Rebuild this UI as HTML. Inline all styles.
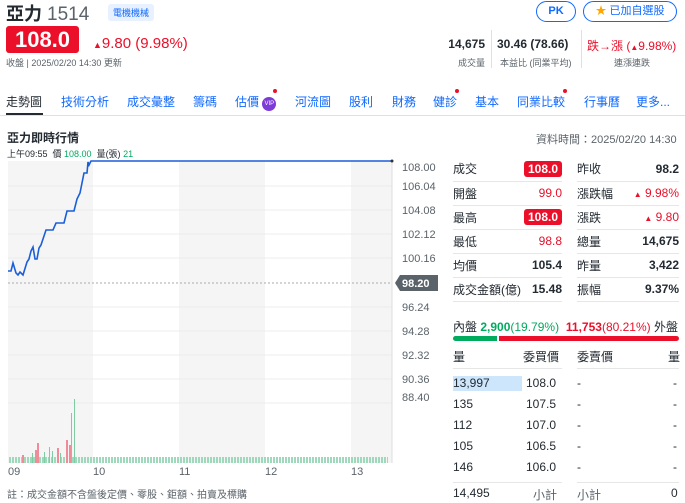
<!DOCTYPE html><html><head><meta charset="utf-8"><style>
*{margin:0;padding:0;box-sizing:border-box}
body{width:685px;height:503px;overflow:hidden;background:#fff;font-family:"Liberation Sans","Noto Sans CJK TC",sans-serif;color:#232a31;position:relative}
.a{position:absolute;white-space:nowrap}
.r{color:#eb0f29}.g{color:#00ab5e}
.tab{position:absolute;top:93px;font-size:12px;color:#0f69ff}
table{border-collapse:collapse}
.q td{height:24px;border-bottom:1px solid #e6e6e6;font-size:12px}
.badge{background:#eb0f29;color:#fff;border-radius:3px;padding:1px 4px;font-weight:bold}
</style></head><body>
<div class="a" style="left:6px;top:0px;font-size:18px;font-weight:bold">亞力 <span style="font-weight:normal;color:#5b636a;font-size:19px">1514</span></div>
<div class="a" style="left:108px;top:4px;font-size:9px;color:#0f69ff;background:#e8f1ff;padding:2px 5px;border-radius:3px">電機機械</div>
<div class="a" style="left:536px;top:1px;width:40px;height:21px;border:1px solid #0f69ff;border-radius:11px;color:#0f69ff;font-size:11px;font-weight:bold;text-align:center;line-height:19px">PK</div>
<div class="a" style="left:583px;top:1px;width:94px;height:21px;border:1px solid #0f69ff;border-radius:11px;color:#0f69ff;font-size:11px;text-align:center;line-height:19px"><span style="color:#ffa700">★</span> 已加自選股</div>
<div class="a" style="left:6px;top:26px;width:73px;height:27px;background:#eb0f29;border-radius:3px;color:#fff;font-size:22px;font-weight:bold;text-align:center;line-height:27px">108.0</div>
<div class="a r" style="left:93px;top:35px;font-size:15px"><span style="font-size:9px">▲</span>9.80 (9.98%)</div>
<div class="a" style="left:6px;top:56px;font-size:9px;color:#5b636a">收盤 | 2025/02/20 14:30 更新</div>
<div class="a" style="left:441px;top:37px;font-size:12px;font-weight:bold;width:44px;text-align:right">14,675</div>
<div class="a" style="left:441px;top:56px;font-size:9px;color:#5b636a;width:44px;text-align:right">成交量</div>
<div class="a" style="left:491px;top:30px;height:38px;border-left:1px solid #e0e0e0"></div>
<div class="a" style="left:497px;top:37px;font-size:12px;font-weight:bold">30.46 (78.66)</div>
<div class="a" style="left:500px;top:56px;font-size:9px;color:#5b636a">本益比 (同業平均)</div>
<div class="a" style="left:581px;top:30px;height:38px;border-left:1px solid #e0e0e0"></div>
<div class="a r" style="left:587px;top:37px;font-size:12px">跌→漲 (<span style="font-size:8px">▲</span>9.98%)</div>
<div class="a" style="left:614px;top:56px;font-size:9px;color:#5b636a">連漲連跌</div>
<div class="tab" style="left:6px;color:#232a31">走勢圖</div>
<div class="a" style="left:6px;top:113px;width:37px;height:3px;background:#232a31"></div>
<div class="a" style="left:0;top:115px;width:685px;border-top:1px solid #e0e0e0"></div>
<div class="tab" style="left:61px">技術分析</div><div class="tab" style="left:127px">成交彙整</div><div class="tab" style="left:193px">籌碼</div>
<div class="tab" style="left:235px">估價 <span style="display:inline-block;width:14px;height:14px;border-radius:7px;background:#7d3bd8;color:#fff;font-size:6px;line-height:14px;text-align:center;vertical-align:1px">VIP</span></div>
<div class="tab" style="left:295px">河流圖</div><div class="tab" style="left:349px">股利</div><div class="tab" style="left:392px">財務</div><div class="tab" style="left:433px">健診</div><div class="tab" style="left:475px">基本</div><div class="tab" style="left:517px">同業比較</div><div class="tab" style="left:584px">行事曆</div><div class="tab" style="left:636px">更多...</div>
<div class="a" style="left:273px;top:89px;width:4px;height:4px;border-radius:2px;background:#eb0f29"></div>
<div class="a" style="left:455px;top:89px;width:4px;height:4px;border-radius:2px;background:#eb0f29"></div>
<div class="a" style="left:563px;top:89px;width:4px;height:4px;border-radius:2px;background:#eb0f29"></div>
<div class="a" style="left:7px;top:129px;font-size:12px;font-weight:bold">亞力即時行情</div>
<div class="a" style="left:7px;top:147px;font-size:9px">上午09:55 &nbsp;價 <span class="g">108.00</span> &nbsp;量(張) <span class="g">21</span></div>
<div class="a" style="left:536px;top:131px;font-size:11px;color:#5b636a">資料時間：2025/02/20 14:30</div>
<svg class="a" style="left:0;top:155px" width="450" height="325">
<defs><pattern id="p" width="3" height="6" patternUnits="userSpaceOnUse"><rect width="2" height="6" fill="#9fd9bb"/></pattern></defs>
<rect x="8" y="6" width="85" height="302" fill="#f5f5f5"/><rect x="179" y="6" width="86" height="302" fill="#f5f5f5"/><rect x="351" y="6" width="41" height="302" fill="#f5f5f5"/>
<g stroke="#ececec"><line x1="8" y1="31" x2="392" y2="31"/><line x1="8" y1="55" x2="392" y2="55"/><line x1="8" y1="79" x2="392" y2="79"/><line x1="8" y1="103" x2="392" y2="103"/><line x1="8" y1="152" x2="392" y2="152"/><line x1="8" y1="176" x2="392" y2="176"/><line x1="8" y1="200" x2="392" y2="200"/><line x1="8" y1="224" x2="392" y2="224"/><line x1="8" y1="248" x2="392" y2="248"/></g>
<line x1="392" y1="6" x2="392" y2="308" stroke="#ddd"/>
<line x1="8" y1="128" x2="392" y2="128" stroke="#aaa" stroke-dasharray="2,2"/>
<polyline fill="none" stroke="#1a5fd8" stroke-width="1.6" points="8,116 11,116 13,108 16,118 18,120 20,117 23,120 27,107 29,104 31,96 33,92 35,104 37,104 39,93 41,90 46,75 53,75 56,68 64,68 67,56 74,56 77,44 80,38 84,18 87,18 88,7 89,10 91,6 392,6"/>
<circle cx="392" cy="6" r="1.5" fill="#333"/>
<rect x="8" y="302" width="380" height="6" fill="url(#p)"/>
<g fill="#f08c9a"><rect x="22" y="300" width="2" height="8"/><rect x="35" y="295" width="2" height="13"/><rect x="37" y="288" width="2" height="20"/><rect x="57" y="293" width="2" height="15"/><rect x="66" y="285" width="2" height="23"/><rect x="69" y="290" width="2" height="18"/></g>
<g fill="#7fcba3"><rect x="32" y="298" width="1" height="10"/><rect x="49" y="292" width="1" height="16"/><rect x="52" y="296" width="1" height="12"/><rect x="60" y="298" width="1" height="10"/><rect x="71" y="258" width="1" height="50"/><rect x="74" y="244" width="1" height="64"/><rect x="44" y="297" width="1" height="11"/></g>
<g font-size="11" fill="#5b636a"><text x="402" y="16">108.00</text><text x="402" y="35">106.04</text><text x="402" y="59">104.08</text><text x="402" y="83">102.12</text><text x="402" y="107">100.16</text><text x="402" y="156">96.24</text><text x="402" y="180">94.28</text><text x="402" y="204">92.32</text><text x="402" y="228">90.36</text><text x="402" y="246">88.40</text>
<text x="8" y="320">09</text><text x="93" y="320">10</text><text x="179" y="320">11</text><text x="265" y="320">12</text><text x="351" y="320">13</text></g>
<path d="M400,120 H438 V136 H400 L395,128 Z" fill="#5b636a"/><text x="402" y="132" font-size="11" font-weight="bold" fill="#fff">98.20</text>
</svg>
<div class="a" style="left:7px;top:486px;font-size:10px;color:#5b636a">註：成交金額不含盤後定價、零股、鉅額、拍賣及標購</div>
<table class="a q" style="left:453px;top:157px;width:109px"><tr><td>成交</td><td align="right"><span class="badge">108.0</span></td></tr><tr><td>開盤</td><td align="right" class="r">99.0</td></tr><tr><td>最高</td><td align="right"><span class="badge">108.0</span></td></tr><tr><td>最低</td><td align="right" class="r">98.8</td></tr><tr><td>均價</td><td align="right"><b>105.4</b></td></tr><tr><td>成交金額(億)</td><td align="right"><b>15.48</b></td></tr></table>
<table class="a q" style="left:577px;top:157px;width:102px"><tr><td>昨收</td><td align="right"><b>98.2</b></td></tr><tr><td>漲跌幅</td><td align="right" class="r"><span style="font-size:8px">▲</span> 9.98%</td></tr><tr><td>漲跌</td><td align="right" class="r"><span style="font-size:8px">▲</span> 9.80</td></tr><tr><td>總量</td><td align="right"><b>14,675</b></td></tr><tr><td>昨量</td><td align="right"><b>3,422</b></td></tr><tr><td>振幅</td><td align="right"><b>9.37%</b></td></tr></table>
<div class="a" style="left:453px;top:318px;font-size:12px">內盤 <b class="g">2,900</b><span class="g">(19.79%)</span></div>
<div class="a" style="right:7px;top:318px;font-size:12px"><b class="r">11,753</b><span class="r">(80.21%)</span> 外盤</div>
<div class="a" style="left:453px;top:336px;width:44px;height:5px;background:#00ab5e;border-radius:3px 0 0 3px"></div>
<div class="a" style="left:499px;top:336px;width:180px;height:5px;background:#eb0f29;border-radius:0 3px 3px 0"></div>
<div class="a" style="left:453px;top:348px;font-size:12px">量</div><div class="a" style="left:523px;top:348px;font-size:12px">委買價</div><div class="a" style="left:577px;top:348px;font-size:12px">委賣價</div><div class="a" style="left:668px;top:348px;font-size:12px">量</div>
<div class="a" style="left:453px;top:368px;width:109px;border-top:1px solid #e6e6e6"></div><div class="a" style="left:577px;top:368px;width:102px;border-top:1px solid #e6e6e6"></div>
<div class="a" style="left:453px;top:376px;width:69px;height:15px;background:#cde6fb"></div>
<div class="a" style="left:453px;top:373px;font-size:12px;line-height:21px">13,997<br>135<br>112<br>105<br>146</div>
<div class="a" style="left:526px;top:373px;font-size:12px;line-height:21px">108.0<br>107.5<br>107.0<br>106.5<br>106.0</div>
<div class="a" style="left:577px;top:373px;font-size:12px;line-height:21px">-<br>-<br>-<br>-<br>-</div>
<div class="a" style="left:673px;top:373px;font-size:12px;line-height:21px">-<br>-<br>-<br>-<br>-</div>
<div class="a" style="left:453px;top:482px;width:109px;border-top:1px solid #e6e6e6"></div><div class="a" style="left:577px;top:482px;width:102px;border-top:1px solid #e6e6e6"></div>
<div class="a" style="left:453px;top:486px;font-size:12px">14,495</div><div class="a" style="left:533px;top:486px;font-size:12px;color:#5b636a">小計</div><div class="a" style="left:577px;top:486px;font-size:12px;color:#5b636a">小計</div><div class="a" style="left:671px;top:486px;font-size:12px">0</div>
</body></html>
